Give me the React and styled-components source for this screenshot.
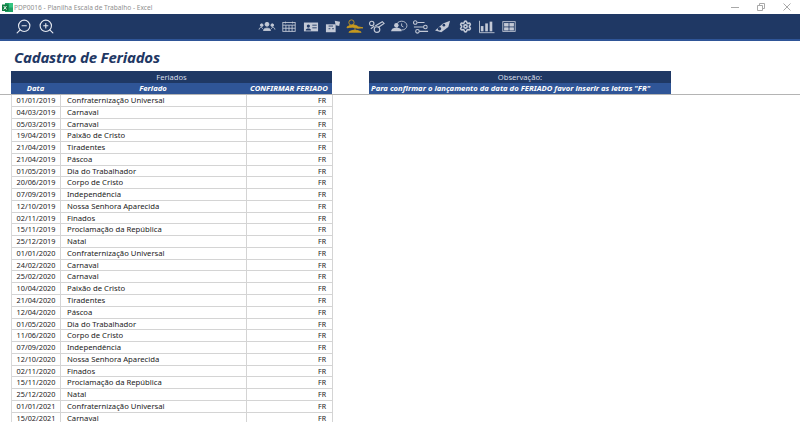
import React from "react";
import styled, { createGlobalStyle } from "styled-components";
import { ZoomIn, ZoomOut, Settings } from "lucide-react";

const Global = createGlobalStyle`
  html, body { margin: 0; padding: 0; background: #fff; overflow: hidden; }
  body { font-family: "Noto Sans", "Open Sans", sans-serif; }
`;

const Page = styled.div`
  width: 800px; height: 422px; overflow: hidden; display: flex; flex-direction: column;
`;
const TitleBar = styled.div`
  height: 14px; display: flex; align-items: center; padding: 0 2px; background: #fff; flex: none;
`;
const AppTitle = styled.span`
  margin-left: 1px; font-size: 6.6px; color: #8f8f8f; white-space: nowrap;
`;
const WindowControls = styled.div`
  margin-left: auto; display: flex; align-items: center; gap: 16px; padding-right: 6px; color: #a8a8a8;
`;
const Toolbar = styled.div`
  height: 25px; flex: none; background: #1f3864; border-bottom: 2px solid #2f5597;
  display: flex; align-items: center; position: relative; padding-left: 15px; color: #e6e9f0;
`;
const ZoomGroup = styled.div`
  display: flex; gap: 6px; align-items: center;
`;
const NavGroup = styled.div`
  position: absolute; left: 258px; top: 5px; display: flex; gap: 4px; align-items: center;
`;
const NavIcon = styled.svg`
  width: 18px; height: 15px; display: block;
`;
const GearSlot = styled.span`
  width: 18px; height: 15px; display: flex; align-items: center; justify-content: center;
`;
const Title = styled.h1`
  margin: 0; height: 30px; flex: none; padding: 6px 0 0 14px; box-sizing: border-box;
  font-size: 15px; line-height: 20px; font-weight: 700; font-style: italic; color: #1f3864;
  font-family: "Noto Sans", sans-serif; white-space: nowrap; letter-spacing: -0.2px;
`;
const Frozen = styled.div`
  display: flex; flex: none; padding-left: 11px; gap: 37px; border-bottom: 1px solid #b4b4b4; height: 23px; box-sizing: content-box;
`;
const Block = styled.div`
  width: ${p => p.$w}px; flex: none;
`;
const BandTop = styled.div`
  height: 12px; background: #1f3864; color: #d8dde8; font-size: 7.6px; line-height: 12px; text-align: center;
`;
const BandSub = styled.div`
  height: 11px; background: #2f5597; color: #fff; font-size: 7.7px; line-height: 11px; font-weight: 700; font-style: italic;
  display: ${p => (p.$grid ? "grid" : "block")};
  grid-template-columns: 49px 186px 86px; white-space: nowrap; overflow: hidden;
`;
const HeadCell = styled.span`
  text-align: center;
`;
const NoteText = styled.span`
  padding-left: 2px;
`;
const Rows = styled.div`
  margin-left: 11px; width: 322px; flex: none; border-left: 1px solid #d9d9d9; box-sizing: border-box;
`;
const Row = styled.div`
  display: grid; grid-template-columns: 49px 186px 86px; height: 11.78px; box-sizing: border-box;
  border-bottom: 1px solid #d4d4d4; font-size: 7.7px; line-height: 11px; color: #222;
`;
const DateCell = styled.div`
  text-align: center; border-right: 1px solid #d4d4d4; white-space: nowrap; font-size: 7.3px;
`;
const NameCell = styled.div`
  padding-left: 6px; border-right: 1px solid #d4d4d4; white-space: nowrap;
`;
const FlagCell = styled.div`
  text-align: right; padding-right: 6px; border-right: 1px solid #d4d4d4; font-size: 7px;
`;

const days = [
  ["01/01/2019","Confraternização Universal"],["04/03/2019","Carnaval"],["05/03/2019","Carnaval"],
  ["19/04/2019","Paixão de Cristo"],["21/04/2019","Tiradentes"],["21/04/2019","Páscoa"],
  ["01/05/2019","Dia do Trabalhador"],["20/06/2019","Corpo de Cristo"],["07/09/2019","Independência"],
  ["12/10/2019","Nossa Senhora Aparecida"],["02/11/2019","Finados"],["15/11/2019","Proclamação da República"],
  ["25/12/2019","Natal"],["01/01/2020","Confraternização Universal"],["24/02/2020","Carnaval"],
  ["25/02/2020","Carnaval"],["10/04/2020","Paixão de Cristo"],["21/04/2020","Tiradentes"],
  ["12/04/2020","Páscoa"],["01/05/2020","Dia do Trabalhador"],["11/06/2020","Corpo de Cristo"],
  ["07/09/2020","Independência"],["12/10/2020","Nossa Senhora Aparecida"],["02/11/2020","Finados"],
  ["15/11/2020","Proclamação da República"],["25/12/2020","Natal"],["01/01/2021","Confraternização Universal"],
  ["15/02/2021","Carnaval"],
];

const ExcelLogo = () => (
  <svg width="11" height="11" viewBox="0 0 11 11">
    <rect x="3" y="1" width="8" height="9" fill="#21a366" />
    <rect x="7" y="1" width="4" height="4.5" fill="#33c481" />
    <rect x="0" y="2.5" width="6.5" height="6.5" fill="#107c41" />
    <path d="M1.7 4l2.8 3.5M4.5 4L1.7 7.5" stroke="#fff" strokeWidth=".9" />
  </svg>
);

const C = "#c3c9d6";
const icons = [
  <g stroke={C} fill={C}><circle cx="10" cy="6" r="2.2"/><path d="M6 13c0-3.500 8-3.500 8 0z"/><circle cx="4" cy="7" r="1.5"/><circle cx="16" cy="7" r="1.500"/><path d="M1 12c0-3 4-3 4-1M19 12c0-3-4-3-4-1" fill="none"/></g>,
  <g stroke={C} fill="none"><rect x="3" y="4" width="14" height="10"/><path d="M3 7h14M6.500 7v7M10 7v7M13.500 7v7M3 10.500h14" /><path d="M6 3v2M14 3v2"/></g>,
  <g><rect x="2" y="4" width="16" height="10" fill={C}/><circle cx="7" cy="8" r="1.800" fill="#1f3864"/><path d="M4 13c0-3 6-3 6 0z" fill="#1f3864"/><path d="M11.500 7h5M11.500 10h5" stroke="#1f3864"/></g>,
  <g fill={C}><rect x="2" y="6" width="11" height="9"/><path d="M12 2l6 1-1 5-4-1z"/><path d="M5 8h5M5 11h2M9 11h2" stroke="#1f3864"/></g>,
  <g fill="#c89a1e" stroke="#c89a1e"><circle cx="6" cy="4" r="3" fill="none"/><path d="M1 9c5-3 9-3 13 0l5 1-6 .5C9 9 5 9 1 10z"/><path d="M3 15c3-3 10-3 14 0z"/><path d="M10 10v4" /></g>,
  <g stroke={C} fill="none" strokeWidth="1.300"><circle cx="4" cy="5" r="2.500"/><circle cx="10" cy="12" r="3.200"/><path d="M8 8l8-5 2 2-7 5M3 11l4-3"/></g>,
  <g fill={C}><path d="M1 14c1-4 4-4 6-4s5 0 6 4z"/><circle cx="7" cy="7" r="2.500"/><ellipse cx="13" cy="7.500" rx="6" ry="5" fill="none" stroke={C}/><path d="M13 5v3l2 1" stroke={C} fill="none"/></g>,
  <g stroke={C} fill="none" strokeWidth="1.200"><circle cx="3.500" cy="4" r="2"/><path d="M6 4h8M2 9h11M8 14h10"/><circle cx="15" cy="9" r="2"/><circle cx="6" cy="14" r="2"/></g>,
  <g fill={C}><path d="M1 13l9-8 8-3-2 7-8 6z"/><circle cx="6" cy="11" r="2" fill="#1f3864"/><circle cx="11" cy="7" r="1.500" fill="#1f3864"/></g>,
  null,
  <g fill={C}><rect x="3" y="8" width="3" height="6"/><rect x="8" y="5" width="3" height="9"/><rect x="13" y="3" width="3" height="11"/><path d="M1.500 2v13.500h17" stroke={C} fill="none"/></g>,
  <g stroke={C} fill="none"><rect x="3" y="3" width="14" height="11"/><rect x="5" y="5" width="4" height="3" fill={C}/><rect x="11" y="5" width="4" height="3" fill={C}/><rect x="5" y="10" width="4" height="2.500" fill={C}/><rect x="11" y="10" width="4" height="2.500" fill={C}/></g>,
];

export default function App() {
  return (
    <Page>
      <Global />
      <TitleBar>
        <ExcelLogo />
        <AppTitle>PDP0016 - Planilha Escala de Trabalho - Excel</AppTitle>
        <WindowControls>
          <svg width="10" height="10" viewBox="0 0 10 10"><path d="M1 5.500h8" stroke="currentColor" /></svg>
          <svg width="10" height="10" viewBox="0 0 10 10" fill="none" stroke="currentColor"><path d="M1.500 3.500h5v5h-5zM3.500 3.500v-2h5v5h-2" /></svg>
          <svg width="10" height="10" viewBox="0 0 10 10"><path d="M1.500 1.500l7 7M8.500 1.500l-7 7" stroke="currentColor" /></svg>
        </WindowControls>
      </TitleBar>
      <Toolbar>
        <ZoomGroup>
          <ZoomOut size={17} strokeWidth={1.6} style={{ transform: "scaleX(-1)" }} />
          <ZoomIn size={17} strokeWidth={1.6} />
        </ZoomGroup>
        <NavGroup>
          {icons.map((ic, i) =>
            ic ? (
              <NavIcon key={i} viewBox="0 0 20 17">{ic}</NavIcon>
            ) : (
              <GearSlot key={i}><Settings size={13} color={C} strokeWidth={3} /></GearSlot>
            )
          )}
        </NavGroup>
      </Toolbar>
      <Title>Cadastro de Feriados</Title>
      <Frozen>
        <Block $w={321}>
          <BandTop>Feriados</BandTop>
          <BandSub $grid>
            <HeadCell>Data</HeadCell>
            <HeadCell>Feriado</HeadCell>
            <HeadCell>CONFIRMAR FERIADO</HeadCell>
          </BandSub>
        </Block>
        <Block $w={302}>
          <BandTop>Observação:</BandTop>
          <BandSub><NoteText>Para confirmar o lançamento da data do FERIADO favor inserir as letras "FR"</NoteText></BandSub>
        </Block>
      </Frozen>
      <Rows>
        {days.map(([d, n], i) => (
          <Row key={i}>
            <DateCell>{d}</DateCell>
            <NameCell>{n}</NameCell>
            <FlagCell>FR</FlagCell>
          </Row>
        ))}
      </Rows>
    </Page>
  );
}
